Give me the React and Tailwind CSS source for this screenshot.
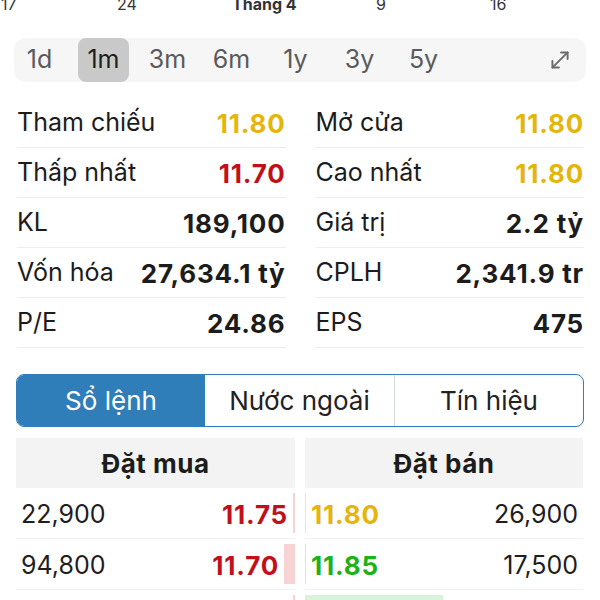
import React from "react";

const YEL = "text-[#e5b50c]";
const RED = "text-[#c0111b]";
const GRN = "text-[#1bb21b]";

function StatRow({ label, value, color = "text-[#1c1c1c]" }) {
  return (
    <div className="flex h-[50px] items-center justify-between border-b border-[#ececec] pt-[1px]">
      <span className="text-[25px] text-[#1c1c1c]">{label}</span>
      <span className={`text-[26px] font-bold tracking-[0.8px] ${color}`}>{value}</span>
    </div>
  );
}

function MoveDiagonal() {
  return (
    <svg width="26" height="26" viewBox="0 0 24 24" fill="none" stroke="#6b6b6b" strokeWidth="1.8" strokeLinecap="round" strokeLinejoin="round">
      <path d="M11 19H5v-6" />
      <path d="M13 5h6v6" />
      <path d="M19 5 5 19" />
    </svg>
  );
}

export default function App() {
  const tfs = ["1d", "1m", "3m", "6m", "1y", "3y", "5y"];
  const left = [
    ["Tham chiếu", "11.80", YEL],
    ["Thấp nhất", "11.70", RED],
    ["KL", "189,100"],
    ["Vốn hóa", "27,634.1 tỷ"],
    ["P/E", "24.86"],
  ];
  const right = [
    ["Mở cửa", "11.80", YEL],
    ["Cao nhất", "11.80", YEL],
    ["Giá trị", "2.2 tỷ"],
    ["CPLH", "2,341.9 tr"],
    ["EPS", "475"],
  ];
  const rows = [
    { bv: "22,900", bp: "11.75", bw: 2, ap: "11.80", ac: YEL, av: "26,900", aw: 1, abar: "bg-[#f7e6b0]" },
    { bv: "94,800", bp: "11.70", bw: 11, ap: "11.85", ac: GRN, av: "17,500", aw: 1, abar: "bg-[#cdeecd]" },
    { bv: "", bp: "", bw: 2, ap: "", ac: GRN, av: "", aw: 138, abar: "bg-[#d8f3d8]" },
  ];
  return (
    <div
      className="h-[600px] w-[600px] overflow-hidden bg-white text-[#1c1c1c]"
      style={{ fontFamily: "Inter, 'Noto Sans', 'Liberation Sans', sans-serif" }}
    >
      {/* axis labels */}
      <div className="relative h-[38px] text-[16px] leading-[20px] text-[#333]">
        <span className="absolute left-[1px] top-[-6px]">17</span>
        <span className="absolute left-[117px] top-[-6px]">24</span>
        <span className="absolute left-[232px] top-[-6px] font-bold">Tháng 4</span>
        <span className="absolute left-[376px] top-[-6px]">9</span>
        <span className="absolute left-[490px] top-[-6px]">16</span>
      </div>

      {/* timeframe bar */}
      <div className="mx-[14px] flex h-[44px] items-center justify-between rounded-xl bg-[#f6f6f6] pr-[13px]">
        <div className="flex h-full gap-[13px]">
          {tfs.map((t) => (
            <div
              key={t}
              className={`flex h-full w-[51px] items-center justify-center rounded-lg text-[25px] ${
                t === "1m" ? "bg-[#c9c9c9] text-[#1e1e1e]" : "text-[#5a5a5a]"
              }`}
            >
              {t}
            </div>
          ))}
        </div>
        <MoveDiagonal />
      </div>

      {/* stats */}
      <div className="mt-[16px] grid grid-cols-2 gap-x-[30px] pl-[17px] pr-[16px]">
        <div className="flex flex-col">
          {left.map(([l, v, c]) => (
            <StatRow key={l} label={l} value={v} color={c} />
          ))}
        </div>
        <div className="flex flex-col">
          {right.map(([l, v, c]) => (
            <StatRow key={l} label={l} value={v} color={c} />
          ))}
        </div>
      </div>

      {/* tabs */}
      <div className="mx-[16px] mt-[26px] flex h-[53px] overflow-hidden rounded-lg border-[1.5px] border-[#2f7dba] text-[26px]">
        <div className="flex w-[188px] items-center justify-center bg-[#2f7eba] text-white">Sổ lệnh</div>
        <div className="flex w-[190px] items-center justify-center border-r border-[#d4d9de] text-[#222]">Nước ngoài</div>
        <div className="flex flex-1 items-center justify-center text-[#222]">Tín hiệu</div>
      </div>

      {/* order book */}
      <div className="mx-[16px] mt-[11px] grid grid-cols-[279px_278px] gap-x-[10px]">
        <div className="flex flex-col">
          <div className="flex h-[50px] items-center justify-center bg-[#f3f3f3] text-[26px] font-bold tracking-[0.5px]">Đặt mua</div>
          {rows.map((r, i) => (
            <div key={i} className="flex h-[51px] items-stretch border-b border-[#efefef]">
              <div className="flex flex-1 items-center justify-between pl-[5px] pr-[5px] pt-[3px]">
                <span className="text-[25px] text-[#1e1e1e]">{r.bv}</span>
                <span className={`text-[26px] font-bold tracking-[0.8px] ${RED}`}>{r.bp}</span>
              </div>
              <div className="flex items-stretch py-[5px]">
                <div className="bg-[#f8d3d6]" style={{ width: r.bw }} />
              </div>
            </div>
          ))}
        </div>
        <div className="flex flex-col">
          <div className="flex h-[50px] items-center justify-center bg-[#f3f3f3] text-[26px] font-bold tracking-[0.5px]">Đặt bán</div>
          {rows.map((r, i) => (
            <div key={i} className="relative flex h-[51px] items-center justify-between border-b border-[#efefef] pl-[6px] pr-[5px] pt-[3px]">
              <div className="absolute bottom-[5px] left-0 top-[5px]">
                <div className={`h-full ${r.abar}`} style={{ width: r.aw }} />
              </div>
              <span className={`relative text-[26px] font-bold tracking-[0.8px] ${r.ac}`}>{r.ap}</span>
              <span className="relative text-[25px] text-[#1e1e1e]">{r.av}</span>
            </div>
          ))}
        </div>
      </div>
    </div>
  );
}
